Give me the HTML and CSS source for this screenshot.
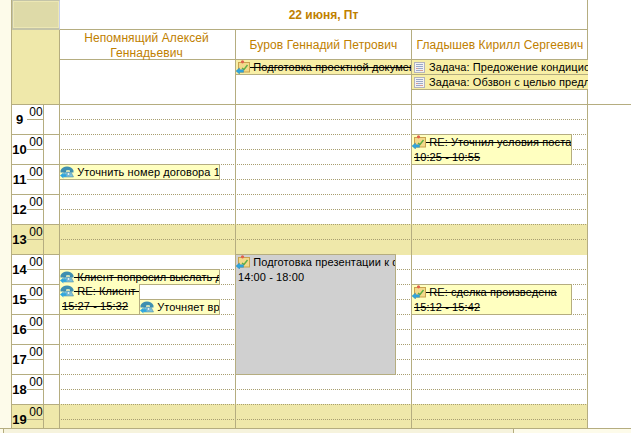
FILE: index.html
```html
<!DOCTYPE html>
<html lang="en">
<head>
  <meta charset="UTF-8" />
  <meta name="viewport" content="width=device-width, initial-scale=1.0"/>
  <title>Календарь</title>
  <link rel="stylesheet" href="styles.css">
</head>
<body>
  <!-- icons -->
  <svg class="defs" width="0" height="0">
    <symbol id="ico-note" viewBox="0 0 14 14">
      <rect x="2.500" y="2.500" width="11" height="9.500" fill="#f3d98a" stroke="#c9a24e"/>
      <circle cx="6.500" cy="1.800" r="1.600" fill="#e0604c"/>
      <path d="M6 8l2 1.500 3.500-4.500" fill="none" stroke="#5fae45" stroke-width="1.400"/>
      <path d="M0 11l3.500-3v1.700h4v2.600h-4v1.700z" fill="#2fa6de" stroke="#1c7fb8" stroke-width=".4"/>
    </symbol>
    <symbol id="ico-phone" viewBox="0 0 14 12">
      <path d="M.5 4.500c2-5.500 11-5.500 13 0v2h-3.500v-1.800c-1-.6-3-.6-4 0v1.800h-5.500z" fill="#3f8fb0"/>
      <path d="M4 6h7l2.500 5h-9.500z" fill="#7fc3dc" stroke="#3f7f9c" stroke-width=".5"/>
      <circle cx="8.500" cy="8" r="1.500" fill="#dff2f8" stroke="#3f7f9c" stroke-width=".5"/>
      <path d="M0 9.500l3.500-3v1.700h3v2.600h-3v1.700z" fill="#2fa6de"/>
    </symbol>
    <symbol id="ico-task" viewBox="0 0 11 11">
      <rect x=".5" y=".5" width="10" height="10" fill="#f2f2f4" stroke="#b4b4bc"/>
      <path d="M2 2.500h7M2 4.500h7M2 6.500h7M2 8.500h7" stroke="#9aa8c8" stroke-width="1"/>
      <path d="M2 6.500h2M6 8.500h3" stroke="#d89a90" stroke-width="1"/>
    </symbol>
  </svg>

  <div class="calendar">
    <div class="strip"></div>

    <div class="main">
      <!-- header -->
      <div class="head">
        <div class="head-side">
          <div class="corner"></div>
        </div>
        <div class="head-cols">
          <div class="date">22 июня, Пт</div>
          <div class="names">
            <div class="name">Непомнящий Алексей Геннадьевич</div>
            <div class="name">Буров Геннадий Петрович</div>
            <div class="name">Гладышев Кирилл Сергеевич</div>
          </div>
          <div class="allday">
            <div class="allday-col"></div>
            <div class="allday-col">
              <div class="chip done"><svg class="ico"><use href="#ico-note"/></svg><span>&nbsp;Подготовка проектной документации</span></div>
            </div>
            <div class="allday-col">
              <div class="chip"><svg class="ico ico-task"><use href="#ico-task"/></svg><span>Задача: Предожение кондиционеров</span></div>
              <div class="chip"><svg class="ico ico-task"><use href="#ico-task"/></svg><span>Задача: Обзвон с целью предложения</span></div>
            </div>
          </div>
        </div>
      </div>

      <!-- hours -->
      <div class="body">
        <div class="times">
          <div class="time"><b>9</b><i>00</i></div>
          <div class="time"><b>10</b><i>00</i></div>
          <div class="time"><b>11</b><i>00</i></div>
          <div class="time"><b>12</b><i>00</i></div>
          <div class="time off"><b>13</b><i>00</i></div>
          <div class="time"><b>14</b><i>00</i></div>
          <div class="time"><b>15</b><i>00</i></div>
          <div class="time"><b>16</b><i>00</i></div>
          <div class="time"><b>17</b><i>00</i></div>
          <div class="time"><b>18</b><i>00</i></div>
          <div class="time off"><b>19</b><i>00</i></div>
        </div>

        <div class="col">
          <div class="hour"></div><div class="hour"></div><div class="hour"></div><div class="hour"></div>
          <div class="hour off"></div><div class="hour"></div><div class="hour"></div><div class="hour"></div>
          <div class="hour"></div><div class="hour"></div><div class="hour off"></div>
          <div class="event ev-a1"><svg class="ico"><use href="#ico-phone"/></svg><span>&nbsp;Уточнить номер договора 1</span></div>
          <div class="event done ev-a2"><svg class="ico"><use href="#ico-phone"/></svg><span>&nbsp;Клиент попросил выслать договор</span></div>
          <div class="event done ev-a3"><svg class="ico"><use href="#ico-phone"/></svg><span>&nbsp;RE: Клиент просит</span><p>15:27 - 15:32</p></div>
          <div class="event ev-a4"><svg class="ico"><use href="#ico-phone"/></svg><span>&nbsp;Уточняет время</span></div>
        </div>

        <div class="col">
          <div class="hour"></div><div class="hour"></div><div class="hour"></div><div class="hour"></div>
          <div class="hour off"></div><div class="hour"></div><div class="hour"></div><div class="hour"></div>
          <div class="hour"></div><div class="hour"></div><div class="hour off"></div>
          <div class="event grey ev-b1"><svg class="ico"><use href="#ico-note"/></svg><span>&nbsp;Подготовка презентации к форуму</span><p>14:00 - 18:00</p></div>
        </div>

        <div class="col">
          <div class="hour"></div><div class="hour"></div><div class="hour"></div><div class="hour"></div>
          <div class="hour off"></div><div class="hour"></div><div class="hour"></div><div class="hour"></div>
          <div class="hour"></div><div class="hour"></div><div class="hour off"></div>
          <div class="event done ev-c1"><svg class="ico"><use href="#ico-note"/></svg><span>&nbsp;RE: Уточнил условия поставки</span><p>10:25 - 10:55</p></div>
          <div class="event done ev-c2"><svg class="ico"><use href="#ico-note"/></svg><span>&nbsp;RE: сделка произведена</span><p>15:12 - 15:42</p></div>
        </div>
      </div>
    </div>
  </div>

  <div class="footer">
    <div class="foot-a"></div>
    <div class="foot-b"></div>
    <div class="foot-c"></div>
  </div>
</body>
</html>
```

FILE: styles.css
```css
* {
  box-sizing: border-box;
}

html, body {
  margin: 0;
  height: 100%;
  overflow: hidden;
}

body {
  font-family: "Liberation Sans", Arial, sans-serif;
  font-size: 12px;
  color: #000;
  background: #fff;
  display: flex;
  flex-direction: column;
}

.defs {
  position: absolute;
}

.calendar {
  display: flex;
  height: 428px;
  flex: none;
}

.strip {
  width: 12px;
  background: #fdfbea;
  border-right: 1px solid #b5ad80;
}

.main {
  flex: 1;
  display: flex;
  flex-direction: column;
  min-width: 0;
}

/* header */
.head {
  display: flex;
  height: 105px;
  border-bottom: 1px solid #b5ad80;
}

.head-side {
  width: 48px;
  background: #efe8aa;
  border-right: 1px solid #b5ad80;
}

.corner {
  height: 30px;
  margin-right: -1px;
  background: #dedaa8;
  border: 1px solid #c4c4a8;
  border-right-color: #c8d0e8;
  border-bottom-width: 2px;
  box-shadow: inset 0 0 0 1px #ece7b4;
}

.head-cols {
  width: 528px;
  border-right: 1px solid #b5ad80;
  display: flex;
  flex-direction: column;
}

.date {
  height: 30px;
  border-bottom: 1px solid #b5ad80;
  color: #c08000;
  font-weight: bold;
  text-align: center;
  padding-top: 8px;
}

.names {
  height: 30px;
  display: flex;
  border-bottom: 1px solid #b5ad80;
  letter-spacing: .1px;
}

.name {
  width: 176px;
  flex: none;
  color: #c08000;
  text-align: center;
  line-height: 15px;
  display: flex;
  align-items: center;
  justify-content: center;
  border-right: 1px solid #b5ad80;
  padding: 2px 10px 0;
}

.name:first-child {
  padding: 3px 12px 0 10px;
}

.name:last-child {
  border-right: none;
  padding: 2px 0 0;
  white-space: nowrap;
}

.allday {
  flex: 1;
  display: flex;
}

.allday-col {
  width: 176px;
  flex: none;
  border-right: 1px solid #b5ad80;
  overflow: hidden;
}

.allday-col:last-child {
  border-right: none;
}

.chip {
  height: 15px;
  background: #f8efa6;
  border-bottom: 1px solid #b5ad80;
  display: flex;
  white-space: nowrap;
  overflow: hidden;
  font-size: 11px;
  letter-spacing: .1px;
}

.chip span, .event span {
  line-height: 15px;
}

.ico {
  width: 14px;
  height: 14px;
  flex: none;
}

.ico-task {
  width: 11px;
  height: 11px;
  margin: 2px 4px 0 2px;
}

.done span, .done p {
  text-decoration: line-through;
}

/* hours */
.body {
  flex: 1;
  display: flex;
  overflow: hidden;
}

.times {
  width: 48px;
  flex: none;
  border-right: 1px solid #b5ad80;
}

.time {
  height: 30px;
  border-bottom: 1px solid #b5ad80;
  display: grid;
  grid-template-columns: 15px 17px 15px;
  background-image: linear-gradient(#b5ad80, #b5ad80);
  background-size: 1px 100%;
  background-position: 31px 0;
  background-repeat: no-repeat;
}

.time b {
  font-size: 13px;
  text-align: center;
  white-space: nowrap;
  padding-top: 7px;
  line-height: 15px;
}

.time i {
  font-style: normal;
  height: 15px;
  text-align: center;
  border-bottom: 1px solid #b5ad80;
  line-height: 15px;
  padding-left: 1px;
}

.off {
  background-color: #efe8aa;
}

.col {
  width: 176px;
  flex: none;
  position: relative;
  border-right: 1px solid #b5ad80;
}

.hour {
  height: 30px;
  position: relative;
  background-image:
    linear-gradient(to right, #a89f70 50%, transparent 50%),
    linear-gradient(to right, #a89f70 50%, transparent 50%);
  background-size: 2px 1px;
  background-position: 1px 14px, 1px 29px;
  background-repeat: repeat-x;
}

/* non working hours start one pixel up, over the dots of the hour before */
.hour.off {
  height: 31px;
  margin-top: -1px;
  background-position: 1px 0, 1px 15px;
}

.event {
  position: absolute;
  left: 0;
  width: 160px;
  background: #ffffc0;
  border: 1px solid #b5ad80;
  border-width: 1px 1px 1px 0;
  overflow: hidden;
  white-space: nowrap;
  font-size: 11px;
  letter-spacing: .1px;
  line-height: 14px;
}

.event .ico {
  vertical-align: top;
}

.event span {
  vertical-align: top;
  display: inline-block;
}

.event p {
  margin: 0;
  padding-left: 2px;
  line-height: 15px;
}

.grey {
  background: #d0d0d0;
}

.ev-a1 { top: 59px;  height: 16px; }
.ev-a2 { top: 164px; height: 16px; }
.ev-a3 { top: 179px; height: 31px; width: 80px; border-top: none; }
.ev-a4 { top: 194px; left: 80px; width: 80px; height: 16px; }
.ev-b1 { top: 149px; height: 121px; }
.ev-c1 { top: 29px;  height: 31px; }
.ev-c2 { top: 179px; height: 31px; }

/* bottom bar */
.footer {
  flex: 1;
  display: flex;
  background: #fdfbea;
  border-top: 1px solid #b5ad80;
}

.foot-a {
  width: 4px;
  border-right: 1px solid #b5ad80;
}

.foot-b {
  width: 510px;
  background: #f6f3dd;
  border-right: 1px solid #b5ad80;
}

.foot-c {
  flex: 1;
}
```
